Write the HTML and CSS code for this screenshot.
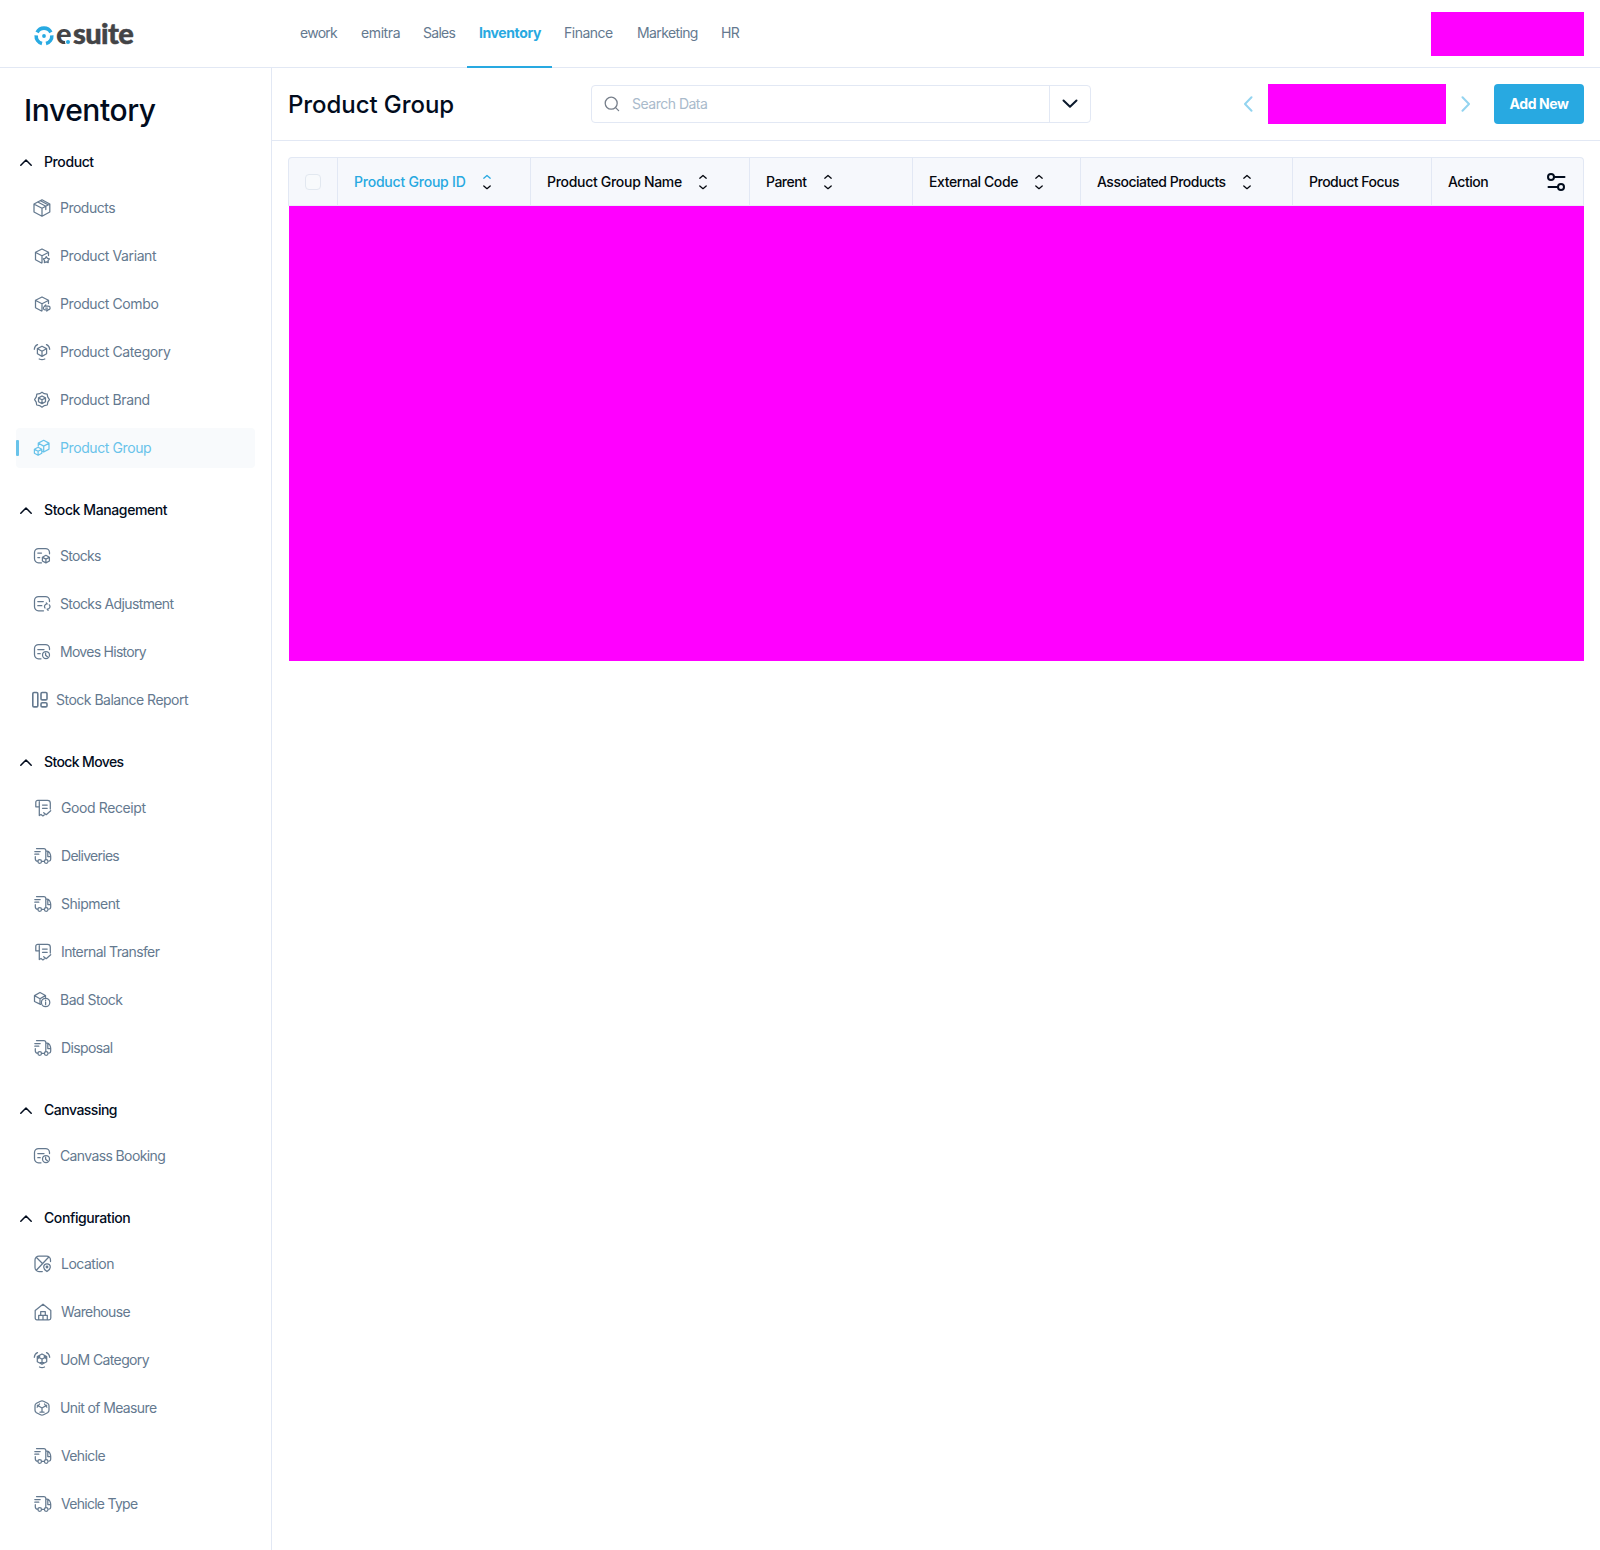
FILE: index.html
```html
<!DOCTYPE html>
<html lang="en">
<head>
<meta charset="utf-8">
<title>Product Group</title>
<link rel="stylesheet" href="styles.css">
</head>
<body>
<svg class="sprite" aria-hidden="true">
  <symbol id="up" viewBox="0 0 12 7"><path d="M.8 6.200 6 1l5.200 5.200"/></symbol>
  <symbol id="box" viewBox="0 0 18 18"><path d="M9 .8 16.800 5v8L9 17.300 1 13V5zM1.300 5.200 9 9.300l7.500-4.100M9 9.300v7.800M4.800 3l8 4.300v3.200M7.500 1.800l7.500 4"/></symbol>
  <symbol id="variant" viewBox="0 0 18 18"><path d="M8.500 16 2.500 12.700V5.300L9 2l6.500 3.300v3.200M2.700 5.500 9 8.700l6.300-3.200M9 8.700V15.800"/><path d="m13.300 9.700 1.100 1.700 2 .5-1.300 1.600.1 2.100-1.900-.7-1.900.7.1-2.100-1.300-1.600 2-.5z"/></symbol>
  <symbol id="combo" viewBox="0 0 18 18"><path d="M8.500 16 2.500 12.700V5.300L9 2l6.500 3.300v3.200M2.700 5.500 9 8.700l6.300-3.200M9 8.700V15.800"/><path d="M11.500 11.200h3.800a1.800 1.800 0 0 1 0 3.600M15 14.800h-2.800a1.700 1.700 0 0 1-.7-3.300M12.800 9.900l-1.300 1.300M13.800 16l1.400-1.200M12.700 13h1.800"/></symbol>
  <symbol id="category" viewBox="0 0 18 18"><path d="M9 3.200 13.600 5.600v5.200L9 13.400l-4.600-2.600V5.600zM4.600 5.800 9 8.200l4.400-2.400M9 8.200v5M1.300 6.300C1.500 4.200 2.700 2.400 4.500 1.600M16.700 6.300c-.2-2.100-1.400-3.900-3.200-4.700M6.200 16c1.800.9 3.800.9 5.600 0"/></symbol>
  <symbol id="brand" viewBox="0 0 18 18"><path d="m9 1.200 2.300 1.500 2.900.4.500 2.800 1.700 2.700-1.600 2.500-.5 2.900-2.900.6L9 16.200l-2.400-1.600-2.900-.6-.5-2.900-1.600-2.500 1.700-2.700.5-2.800 2.900-.4z"/><path d="m9 5 3.500 1.900v3.800L9 12.600l-3.500-1.900V6.900zM5.700 7.100 9 8.800l3.300-1.700M9 8.800v3.600"/></symbol>
  <symbol id="group" viewBox="0 0 18 18"><path d="M5.300 7V4.100L10.700 1.300l5.300 2.800v6L10.700 13l-1.200-.6M5.500 4.300l5.200 2.800L16 4.200M10.700 7.100v5.500"/><path d="m5.100 8.300 3.700 2v4l-3.700 2-3.700-2v-4zM1.600 10.400l3.500 1.900 3.500-1.900M5.100 12.300v4"/></symbol>
  <symbol id="stocks" viewBox="0 0 18 18"><path d="M8.500 15.800H5.500a4 4 0 0 1-4-4V5.500a4 4 0 0 1 4-4h7a4 4 0 0 1 4 4v1.300M4.800 6h3.700M4.800 10.500h1.900"/><path d="m12.900 8.300 3.500 1.900v3.800l-3.500 1.900-3.500-1.900v-3.800zM9.600 10.400l3.300 1.700 3.300-1.700M12.900 12.100v3.600"/></symbol>
  <symbol id="adjust" viewBox="0 0 18 18"><path d="M10.500 15.800h-5a4 4 0 0 1-4-4V5.500a4 4 0 0 1 4-4h7a4 4 0 0 1 4 4v1M4.800 6.500h5.500M4.800 10.700h4"/><path d="M12 13a2.600 2.600 0 0 1 2.200-4.100l-.9-1M16.300 9.800a2.600 2.600 0 0 1-2.200 4.300l1 1.200"/></symbol>
  <symbol id="history" viewBox="0 0 18 18"><path d="M8 15.800H5.500a4 4 0 0 1-4-4V5.500a4 4 0 0 1 4-4h7a4 4 0 0 1 4 4v1M4.800 6.500H11M4.800 10.700h2.400"/><circle cx="13" cy="12" r="3.500"/><path d="M12.600 10v2.200l1.800 1.600"/></symbol>
  <symbol id="report" viewBox="0 0 18 18"><path d="M3 1.500h2.600q1.200 0 1.200 1.200v12q0 1.200-1.200 1.200H3q-1.200 0-1.200-1.200v-12q0-1.200 1.200-1.200zM11.200 1.500h3.600q1.200 0 1.200 1.200v5q0 1.200-1.200 1.200h-3.600q-1.200 0-1.200-1.200v-5q0-1.200 1.200-1.200zM11.200 11.800h3.600q1.200 0 1.200 1.200v1.700q0 1.200-1.200 1.200h-3.600q-1.200 0-1.200-1.200V13q0-1.200 1.200-1.200z"/></symbol>
  <symbol id="receipt" viewBox="0 0 18 18"><path d="M3.800 1.300h9.700a2.800 2.800 0 0 1 2.800 2.800v6M3.800 1.300a2 2 0 0 0-2 2v4.500h3.600M5.300 2.500v14l1.700-1 1.900 1.400 1.300-1M8.500 6h4.700M8.500 9.300h4.700M9.700 13.700l2.500 2 4.500-4"/></symbol>
  <symbol id="truck" viewBox="0 0 18 18"><path d="M2.500 1.500h7.300a2 2 0 0 1 2 2v9M.8 4.500h5.400M.8 7.200h4M1.300 9.700v2a2.500 2.500 0 0 0 2.500 2.500M7.500 14.300h2.800M11.800 4h1.500c2 0 3.400 3.700 3.400 5.500v2.700a2 2 0 0 1-1.800 2M13.800 4.500v5h2.700"/><circle cx="5.700" cy="14.500" r="1.800"/><circle cx="12.200" cy="14.500" r="1.800"/></symbol>
  <symbol id="bad" viewBox="0 0 18 18"><path d="M7.500 13.400 1.500 10.500V4.600L7 1.500l5.500 3v2M1.700 4.800 7 7.700l5.300-3.100M7 7.700v5.400"/><circle cx="12.600" cy="11.500" r="4.200"/><path d="M12.600 11.200v2.500M12.600 9v.7"/></symbol>
  <symbol id="location" viewBox="0 0 18 18"><path d="M8.300 16.500H5a4 4 0 0 1-4-4V5a4 4 0 0 1 4-4h7.500a4 4 0 0 1 4 4v1.500M2.300 15.300 14.800 2M2.200 2.300l6 6"/><path d="M13 16.500c-2-1.300-3.300-2.500-3.300-4.300a3.300 3.300 0 0 1 6.600 0c0 1.800-1.300 3-3.300 4.300z"/><circle cx="13" cy="12" r=".8"/></symbol>
  <symbol id="warehouse" viewBox="0 0 18 18"><path d="M3 16.800q-1.800 0-1.800-1.800V7.600L9 1.200l7.800 6.400V15q0 1.800-1.800 1.800zM4.700 16.500v-4.200h8.600v4.200M6.700 12.200V8.500h4.600v3.700M9 12.300v4.200"/></symbol>
  <symbol id="uomcat" viewBox="0 0 18 18"><path d="m9 3 4.700 2.500v5.200L9 13.300l-4.700-2.600V5.500zM5.500 6 9 8.200 12.500 6M9 8.200v3.300M7.200 11.700h3.600M4.500 8l2.200-2.700M13.500 8l-2.200-2.700M1.300 6.300C1.500 4.200 2.700 2.400 4.500 1.600M16.700 6.300c-.2-2.100-1.400-3.900-3.200-4.700M6.500 16c1.700.8 3.400.8 5 0"/></symbol>
  <symbol id="uom" viewBox="0 0 18 18"><path d="M7.500 2.200Q9 1.400 10.500 2.200l4 2.100Q16 5.200 16 6.700v4.600q0 1.500-1.500 2.400l-4 2.100Q9 16.600 7.500 15.800l-4-2.100Q2 12.800 2 11.300V6.700q0-1.500 1.500-2.400zM4.300 6.200 9 9l4.700-2.800M9 9v4M7 13.200h4M4.200 8.200 6.500 5M13.800 8.200 11.500 5"/></symbol>
</svg>

<header class="topbar">
  <div class="logo">
    <svg class="logo-mark" viewBox="0 0 20 20"><path d="M3.100 6.300A7.800 7.800 0 0 1 16.900 6.300M17.800 9.300A7.800 7.800 0 0 1 12 17.500M8 17.500A7.800 7.800 0 0 1 2.200 9.300"/><circle cx="10" cy="10" r="1.900"/></svg>
    <span class="logo-word"><span class="logo-e">e</span><span class="logo-rest">suite</span></span>
  </div>
  <nav class="tabs">
    <a class="tab narrow">ework</a><a class="tab">emitra</a><a class="tab narrow">Sales</a><a class="tab tab-active">Inventory</a><a class="tab snug">Finance</a><a class="tab tight">Marketing</a><a class="tab tight">HR</a>
  </nav>
  <div class="account"></div>
</header>

<div class="layout">
  <aside class="sidebar">
    <h1 class="module">Inventory</h1>
    <section class="section">
      <h2 class="section-title"><svg><use href="#up"/></svg>Product</h2>
      <a class="item snug"><svg><use href="#box"/></svg>Products</a>
      <a class="item"><svg><use href="#variant"/></svg>Product Variant</a>
      <a class="item"><svg><use href="#combo"/></svg>Product Combo</a>
      <a class="item"><svg><use href="#category"/></svg>Product Category</a>
      <a class="item"><svg><use href="#brand"/></svg>Product Brand</a>
      <a class="item item-active"><svg><use href="#group"/></svg>Product Group</a>
    </section>
    <section class="section">
      <h2 class="section-title"><svg><use href="#up"/></svg>Stock Management</h2>
      <a class="item narrow"><svg><use href="#stocks"/></svg>Stocks</a>
      <a class="item tight"><svg><use href="#adjust"/></svg>Stocks Adjustment</a>
      <a class="item narrow"><svg><use href="#history"/></svg>Moves History</a>
      <a class="item item-report snug"><svg><use href="#report"/></svg>Stock Balance Report</a>
    </section>
    <section class="section">
      <h2 class="section-title tight"><svg><use href="#up"/></svg>Stock Moves</h2>
      <a class="item item-wide"><svg><use href="#receipt"/></svg>Good Receipt</a>
      <a class="item item-wide narrow"><svg><use href="#truck"/></svg>Deliveries</a>
      <a class="item item-wide snug"><svg><use href="#truck"/></svg>Shipment</a>
      <a class="item item-wide tight"><svg><use href="#receipt"/></svg>Internal Transfer</a>
      <a class="item snug"><svg><use href="#bad"/></svg>Bad Stock</a>
      <a class="item item-wide tight"><svg><use href="#truck"/></svg>Disposal</a>
    </section>
    <section class="section">
      <h2 class="section-title snug"><svg><use href="#up"/></svg>Canvassing</h2>
      <a class="item tight"><svg><use href="#history"/></svg>Canvass Booking</a>
    </section>
    <section class="section">
      <h2 class="section-title"><svg><use href="#up"/></svg>Configuration</h2>
      <a class="item item-wide snug"><svg><use href="#location"/></svg>Location</a>
      <a class="item item-wide tight"><svg><use href="#warehouse"/></svg>Warehouse</a>
      <a class="item tight"><svg><use href="#uomcat"/></svg>UoM Category</a>
      <a class="item tight"><svg><use href="#uom"/></svg>Unit of Measure</a>
      <a class="item item-wide tight"><svg><use href="#truck"/></svg>Vehicle</a>
      <a class="item item-wide narrow"><svg><use href="#truck"/></svg>Vehicle Type</a>
    </section>
  </aside>

  <main class="main">
    <div class="page-head">
      <h2 class="page-title">Product Group</h2>
      <div class="search">
        <svg class="search-icon" viewBox="0 0 16 16"><circle cx="7.200" cy="7.200" r="6"/><path d="m11.600 11.600 3 3"/></svg>
        <span class="placeholder">Search Data</span>
        <span class="search-toggle"><svg viewBox="0 0 16 10"><path d="m1.500 1.500 6.500 6.300 6.500-6.300"/></svg></span>
      </div>
      <div class="pager">
        <svg class="arrow" viewBox="0 0 10 16"><path d="M8.500 1.300 2 8l6.500 6.700"/></svg>
        <span class="range"></span>
        <svg class="arrow" viewBox="0 0 10 16"><path d="M1.500 1.300 8 8l-6.500 6.700"/></svg>
      </div>
      <button class="add">Add New</button>
    </div>
    <div class="table">
      <div class="thead">
        <div class="th th-check"><span class="checkbox"></span></div>
        <div class="th th-sorted"><span>Product Group ID</span><svg class="sort" viewBox="0 0 8 16"><path class="sort-up" d="M.8 4.200 4 1.500l3.200 2.700"/><path d="M.8 12 4 14.700 7.200 12"/></svg></div>
        <div class="th th-name"><span>Product Group Name</span><svg class="sort" viewBox="0 0 8 16"><path d="M.8 4.200 4 1.500l3.200 2.700"/><path d="M.8 12 4 14.700 7.200 12"/></svg></div>
        <div class="th snug"><span>Parent</span><svg class="sort sort-far" viewBox="0 0 8 16"><path d="M.8 4.200 4 1.500l3.200 2.700"/><path d="M.8 12 4 14.700 7.200 12"/></svg></div>
        <div class="th"><span>External Code</span><svg class="sort" viewBox="0 0 8 16"><path d="M.8 4.200 4 1.500l3.200 2.700"/><path d="M.8 12 4 14.700 7.200 12"/></svg></div>
        <div class="th snug"><span>Associated Products</span><svg class="sort" viewBox="0 0 8 16"><path d="M.8 4.200 4 1.500l3.200 2.700"/><path d="M.8 12 4 14.700 7.200 12"/></svg></div>
        <div class="th snug"><span>Product Focus</span></div>
        <div class="th snug"><span>Action</span><svg class="columns" viewBox="0 0 20 20"><circle cx="5" cy="5" r="3"/><path d="M8 5h10.500M2.500 15H12"/><circle cx="15" cy="15" r="3"/></svg></div>
      </div>
      <div class="tbody"></div>
    </div>
  </main>
</div>
</body>
</html>
```
FILE: styles.css
```css
* { box-sizing: border-box; }
body {
  margin: 0;
  background: #fff;
  color: #020c1d;
  font: 400 14px/20px Inter, "Liberation Sans", sans-serif;
  letter-spacing: -0.4px;
}
svg { fill: none; stroke: currentColor; stroke-linecap: round; stroke-linejoin: round; flex: none; }
h1, h2 { margin: 0; }
.sprite { display: none; }

/* Tracking steps for labels */
.snug { letter-spacing: -0.5px; }
.tight { letter-spacing: -0.62px; }
.narrow { letter-spacing: -0.72px; }

.topbar {
  display: flex;
  height: 68px;
  border-bottom: 1px solid #e2e8f4;
}
.logo { display: flex; align-items: center; width: 288px; padding-left: 34px; }
.logo-mark { width: 20px; height: 20px; margin-top: 5px; color: #28aae2; stroke-width: 3.6; stroke-linecap: butt; }
.logo-mark circle { fill: currentColor; stroke: none; }
.logo-word { display: flex; margin: -1px 0 0 2px; color: #434447; font: 900 29px/34px Lato, sans-serif; letter-spacing: -0.6px; }
.logo-e { position: relative; margin-right: 2px; }
.logo-e::after {
  content: "";
  position: absolute;
  right: 1px;
  bottom: 6px;
  width: 4px;
  height: 4px;
  border-radius: 50%;
  background: #28aae2;
  box-shadow: 0 0 0 1px #fff;
}
.logo-rest { -webkit-text-stroke: 0.5px #434447; }
.tabs { display: grid; grid-template-columns: 61px 62px 56px 85px 73px 84px 43px; height: 68px; }
.tab { padding: 23px 0 0 12px; color: #64798f; }
.tab-active { color: #28a9e1; font-weight: 700; border-bottom: 2px solid #28a9e1; }
.account { width: 153px; height: 44px; margin: 12px 16px 0 auto; background: #f0f; }

.layout { display: flex; min-height: 1482px; }
.sidebar { width: 272px; padding: 24px 16px 0; border-right: 1px solid #e2e8f4; flex: none; }
.module { padding-left: 8px; font-size: 30px; line-height: 36px; font-weight: 500; letter-spacing: -0.42px; }
.section { display: flex; flex-direction: column; gap: 8px; margin-bottom: 32px; }
.module + .section { margin-top: 24px; }
.section-title { display: flex; align-items: center; gap: 12px; height: 20px; margin-bottom: 8px; padding-left: 4px; font-size: 14px; line-height: 20px; font-weight: 500; }
.section-title svg { width: 12px; height: 7px; stroke-width: 1.5; }
.item { display: flex; align-items: center; gap: 9px; height: 40px; padding-left: 17px; border-radius: 4px; color: #64798f; }
.item svg { width: 18px; height: 18px; stroke-width: 1.25; }
.item-wide { gap: 9px; padding-left: 18px; }
.item-report { padding-left: 15px; gap: 7px; }
.item.item-report svg { stroke-width: 1.6; }
.item-active { position: relative; color: #69c3ea; background: #f8fafc; }
.item-active::before { content: ""; position: absolute; left: 0; top: 12px; width: 3px; height: 16px; border-radius: 1px; background: #69c3ea; }

.main { flex: 1; min-width: 0; }
.page-head { display: flex; align-items: center; height: 73px; padding: 0 16px; border-bottom: 1px solid #e2e8f4; }
.page-title { width: 303px; padding-top: 2px; font-size: 24px; line-height: 32px; font-weight: 500; letter-spacing: -0.07px; }
.search { display: flex; align-items: center; width: 500px; height: 38px; border: 1px solid #e2e8f4; border-radius: 4px; color: #a9bacb; }
.search-icon { width: 16px; height: 16px; margin: 0 12px 0 12px; color: #777f8b; stroke-width: 1.3; }
.placeholder { letter-spacing: -0.5px; }
.search-toggle { display: flex; align-items: center; justify-content: center; width: 41px; height: 36px; margin-left: auto; border-left: 1px solid #e2e8f4; color: #0b192c; }
.search-toggle svg { width: 16px; height: 10px; stroke-width: 2; }
.pager { display: flex; align-items: center; gap: 15px; margin-left: auto; }
.arrow { width: 10px; height: 16px; color: #93d4f0; stroke-width: 2; }
.range { width: 178px; height: 40px; background: #f0f; }
.add { width: 90px; height: 40px; margin-left: 23px; padding: 0; border: 0; border-radius: 4px; background: #28a9e1; color: #fff; font: inherit; font-weight: 700; letter-spacing: -0.4px; }

.table { margin: 16px 16px 0; }
.thead { display: grid; grid-template-columns: 49px 193px 219px 163px 168px 212px 139px 151px; height: 49px; border: 1px solid #e2e8f4; border-bottom-color: #e9eef6; border-radius: 4px 4px 0 0; background: #f6f8fc; }
.th { display: flex; align-items: center; gap: 17px; padding-left: 16px; border-right: 1px solid #e2e8f4; font-weight: 500; color: #05080f; white-space: nowrap; }
.th:last-child { border-right: 0; }
.th-sorted { color: #28a9e1; letter-spacing: -0.22px; }
.th-name { letter-spacing: -0.3px; }
.checkbox { width: 16px; height: 16px; border: 1px solid #e2e8f0; border-radius: 4px; background: #f8fafc; }
.sort { width: 8px; height: 16px; color: #05080f; stroke-width: 1.3; }
.sort-up { color: #28a9e1; stroke: #28a9e1; }
.sort-far { margin-left: 1px; }
.columns { width: 20px; height: 20px; margin-left: auto; margin-right: 17px; color: #020c1d; stroke-width: 2; }
.tbody { height: 455px; margin-left: 1px; background: #f0f; }
```
